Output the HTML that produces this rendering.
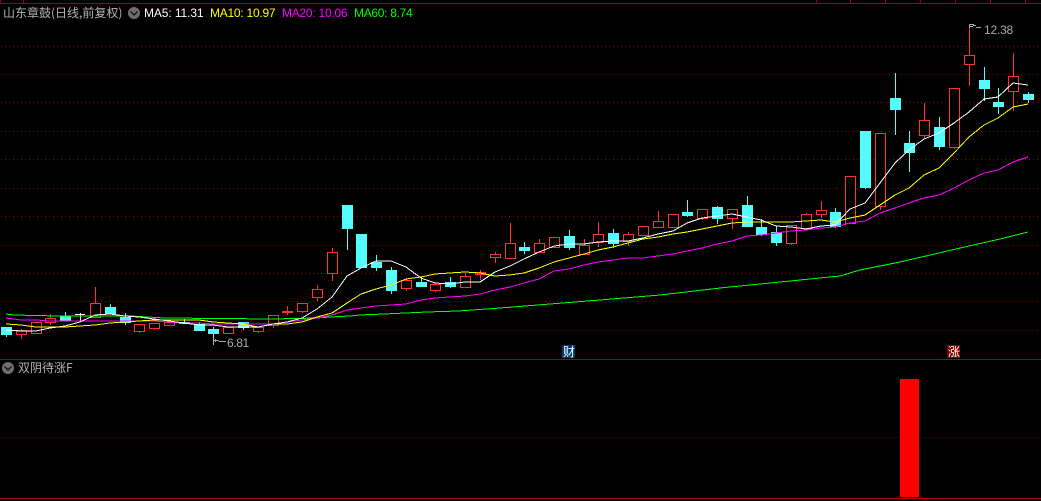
<!DOCTYPE html>
<html><head><meta charset="utf-8"><style>
html,body{margin:0;padding:0;background:#000;width:1041px;height:501px;overflow:hidden}
svg{position:absolute;left:0;top:0}
.t{position:absolute;white-space:nowrap;font:12px/14px "Liberation Sans",sans-serif}
.c{font-family:"WenQuanYi Zen Hei","Noto Sans CJK SC",sans-serif;color:#b4b4b4;font-size:12px}
</style></head><body>
<svg width="1041" height="501" viewBox="0 0 1041 501" shape-rendering="crispEdges">
<defs>
<pattern id="d" x="1" y="0" width="4" height="1" patternUnits="userSpaceOnUse"><rect width="1" height="1" fill="#a00000"/></pattern>
<pattern id="e" x="1" y="0" width="4" height="1" patternUnits="userSpaceOnUse"><rect width="1" height="1" fill="#800000"/></pattern>
</defs>
<rect width="1041" height="501" fill="#000"/>
<g fill="url(#d)">
<rect y="46" width="1041" height="1"/><rect y="74" width="1041" height="1"/><rect y="102" width="1041" height="1"/><rect y="131" width="1041" height="1"/><rect y="159" width="1041" height="1"/><rect y="188" width="1041" height="1"/><rect y="216" width="1041" height="1"/><rect y="245" width="1041" height="1"/><rect y="273" width="1041" height="1"/><rect y="301" width="1041" height="1"/><rect y="330" width="1041" height="1"/>
</g>
<rect y="437" width="1041" height="1" fill="url(#e)"/>
<path d="M0 3.500H1041M0.500 0V3M23.500 0V3M816.500 0V3M850.500 0V3M885.500 0V3M920.500 0V3M955.500 0V3M990.500 0V3M1025.500 0V3M0 359.500H1041" stroke="#a00000" fill="none"/>
<rect x="0" y="498" width="1041" height="1" fill="#c00000"/>
<rect x="900" y="379" width="19" height="118" fill="#f00"/>
<!-- cyan wicks -->
<path fill="none" stroke="#54fcfc" d="M6.500 327V337M65.500 312V321M110.500 304V314M125.500 313V325M184.500 319V324M199.500 322V331M213.500 327V338M243.500 322V330M347.500 205V250M361.500 234V268M376.500 255V271M391.500 267V294M421.500 277V287M450.500 277V288M524.500 242V254M569.500 230V250M613.500 229V248M687.500 200V217M717.500 206V224M747.500 196V227M761.500 219V236M776.500 226V246M835.500 208V228M865.500 131V189M895.500 73V135M909.500 131V172M939.500 117V150M984.500 67V101M998.500 88V114M1028.500 92V103"/>
<!-- cyan bodies -->
<g fill="#54fcfc">
<rect x="1" y="327" width="11" height="8"/><rect x="60" y="316" width="11" height="5"/><rect x="105" y="307" width="11" height="7"/><rect x="120" y="317" width="11" height="6"/><rect x="179" y="322" width="11" height="2"/><rect x="194" y="324" width="11" height="7"/><rect x="208" y="329" width="11" height="5"/><rect x="238" y="322" width="11" height="6"/><rect x="342" y="205" width="11" height="24"/><rect x="356" y="234" width="11" height="34"/><rect x="371" y="262" width="11" height="6"/><rect x="386" y="270" width="11" height="21"/><rect x="416" y="282" width="11" height="5"/><rect x="445" y="282" width="11" height="5"/><rect x="519" y="247" width="11" height="4"/><rect x="564" y="236" width="11" height="12"/><rect x="608" y="233" width="11" height="11"/><rect x="682" y="212" width="11" height="4"/><rect x="712" y="207" width="11" height="12"/><rect x="742" y="205" width="11" height="22"/><rect x="756" y="227" width="11" height="8"/><rect x="771" y="232" width="11" height="11"/><rect x="830" y="212" width="11" height="15"/><rect x="860" y="131" width="11" height="57"/><rect x="890" y="98" width="11" height="12"/><rect x="904" y="143" width="11" height="10"/><rect x="934" y="127" width="11" height="20"/><rect x="979" y="80" width="11" height="9"/><rect x="993" y="102" width="11" height="5"/><rect x="1023" y="94" width="11" height="6"/>
</g>
<path fill="none" stroke="#fff" d="M80.500 313V321M75 314.500H85"/>
<!-- red wicks -->
<path fill="none" stroke="#ff3232" d="M21.500 329V339M36.500 322V334M50.500 314V325M95.500 287V318M139.500 324V333M154.500 323V330M169.500 320V326M228.500 327V334M258.500 327V333M273.500 315V328M287.500 306V315M302.500 303V313M317.500 285V301M332.500 248V281M406.500 278V291M435.500 284V292M465.500 273V288M480.500 270V280M495.500 252V263M510.500 223V259M539.500 239V253M554.500 237V248M584.500 239V255M598.500 222V247M628.500 232V246M643.500 226V236M658.500 211V228M673.500 214V228M702.500 209V220M732.500 209V229M791.500 225V245M806.500 213V229M821.500 201V218M850.500 176V224M880.500 133V210M924.500 103V138M954.500 88V149M969.500 28V86M1013.500 53V111"/>
<!-- red bodies -->
<g fill="#000" stroke="#ff3232">
<rect x="16.500" y="330.500" width="10" height="4"/><rect x="31.500" y="322.500" width="10" height="11"/><rect x="45.500" y="318.500" width="10" height="4"/><rect x="90.500" y="303.500" width="10" height="14"/><rect x="134.500" y="324.500" width="10" height="7"/><rect x="149.500" y="323.500" width="10" height="5"/><rect x="164.500" y="322.500" width="10" height="3"/><rect x="223.500" y="327.500" width="10" height="6"/><rect x="253.500" y="327.500" width="10" height="4"/><rect x="268.500" y="315.500" width="10" height="10"/><rect x="282.500" y="311.500" width="10" height="1"/><rect x="297.500" y="303.500" width="10" height="8"/><rect x="312.500" y="289.500" width="10" height="8"/><rect x="327.500" y="252.500" width="10" height="21"/><rect x="401.500" y="280.500" width="10" height="8"/><rect x="430.500" y="284.500" width="10" height="6"/><rect x="460.500" y="276.500" width="10" height="11"/><rect x="475.500" y="272.500" width="10" height="2"/><rect x="490.500" y="254.500" width="10" height="3"/><rect x="505.500" y="243.500" width="10" height="15"/><rect x="534.500" y="243.500" width="10" height="9"/><rect x="549.500" y="237.500" width="10" height="10"/><rect x="579.500" y="245.500" width="10" height="9"/><rect x="593.500" y="234.500" width="10" height="8"/><rect x="623.500" y="234.500" width="10" height="7"/><rect x="638.500" y="226.500" width="10" height="9"/><rect x="653.500" y="221.500" width="10" height="6"/><rect x="668.500" y="214.500" width="10" height="13"/><rect x="697.500" y="209.500" width="10" height="9"/><rect x="727.500" y="209.500" width="10" height="9"/><rect x="786.500" y="225.500" width="10" height="18"/><rect x="801.500" y="214.500" width="10" height="14"/><rect x="816.500" y="210.500" width="10" height="4"/><rect x="845.500" y="176.500" width="10" height="47"/><rect x="875.500" y="133.500" width="10" height="73"/><rect x="919.500" y="120.500" width="10" height="15"/><rect x="949.500" y="88.500" width="10" height="59"/><rect x="964.500" y="55.500" width="10" height="9"/><rect x="1008.500" y="76.500" width="10" height="15"/>
</g>
<!-- MA60 -->
<polyline fill="none" stroke="#00ff00" points="6,314 14,315 58,316 130,316 165,318 273,319 317,318 330,317 350,316 360,315 384,314 427,312 458,311 500,308 550,304 600,300 660,295 720,288 780,282 840,276 860,270 900,262 956,249 1000,239 1028,232"/>
<!-- MA20 -->
<polyline fill="none" stroke="#ff00ff" points="6,318 21,320 36,320 50,321 125,321 154,321 169,322 184,323 199,323 213,324 273,324 287,322 302,320 317,318 332,315 347,310 361,308 376,306 391,305 406,304 421,300 435,298 450,297 465,296 480,294 495,290 510,287 524,283 539,279 554,271 569,269 584,265 598,262 613,260 628,258 643,258 658,256 673,254 687,251 702,248 717,244 732,241 747,236 761,235 776,233 791,231 806,230 821,228 835,227 850,223 865,221 880,213 895,208 909,203 924,198 939,195 954,188 969,180 984,173 998,170 1013,162 1028,157"/>
<!-- MA10 -->
<polyline fill="none" stroke="#ffff00" points="6,324 21,325 36,327 50,327 65,327 80,326 95,325 110,323 125,322 139,321 154,320 169,320 184,320 199,320 213,322 228,323 243,324 258,327 273,324 287,324 302,322 317,317 332,313 347,303 361,294 376,289 391,285 406,279 421,277 435,274 450,273 465,272 480,273 495,276 510,275 524,273 539,268 554,262 569,258 584,254 598,250 613,247 628,243 643,239 658,237 673,234 687,232 702,229 717,226 732,223 747,222 761,222 776,222 791,222 806,221 821,220 835,222 850,218 865,215 880,205 895,195 909,188 924,175 939,168 954,153 969,137 984,125 998,118 1013,107 1028,104"/>
<!-- MA5 -->
<polyline fill="none" stroke="#ffffff" points="6,330 21,331 36,331 50,328 65,326 80,322 95,315 110,314 125,316 139,317 154,319 169,321 184,323 199,325 213,325 228,327 243,327 258,327 273,324 287,322 302,318 317,309 332,297 347,276 361,268 376,261 391,261 406,267 421,278 435,283 450,284 465,282 480,282 495,272 510,266 524,259 539,252 554,246 569,244 584,244 598,242 613,241 628,241 643,238 658,234 673,231 687,223 702,218 717,216 732,214 747,217 761,220 776,226 791,227 806,229 821,226 835,225 850,209 865,203 880,183 895,163 909,150 924,139 939,133 954,123 969,112 984,99 998,97 1013,83 1028,85"/>
<!-- markers -->
<path fill="none" stroke="#aaa" d="M213.500 338V345M214 340.500H219M219 341.500H226M215 339.500H216M215 341.500H216"/>
<path fill="none" stroke="#aaa" d="M969.500 24V28M970 24.500H974M970 26.500H973M973 25.500H976M976 27.500H981"/>
<!-- badges -->
<rect x="562" y="345" width="13" height="13" fill="#003a70"/>
<rect x="947" y="345" width="13" height="13" fill="#800000"/>
</svg>
<svg width="1041" height="501" viewBox="0 0 1041 501">
<circle cx="134" cy="13" r="6" fill="#6e6e6e"/><path d="M130.500 11.500L134 15L137.500 11.500" fill="none" stroke="#111" stroke-width="1.300"/>
<circle cx="8" cy="368" r="6" fill="#6e6e6e"/><path d="M4.500 366.500L8 370L11.500 366.500" fill="none" stroke="#111" stroke-width="1.300"/>
</svg>
<div class="t c" style="left:3px;top:6px;width:125px">山东章鼓(日线,前复权)</div>
<div class="t" style="left:144px;top:6px;color:#fff;letter-spacing:-.1px">MA5: 11.31</div>
<div class="t" style="left:210px;top:6px;color:#ff0;letter-spacing:-.25px">MA10: 10.97</div>
<div class="t" style="left:282px;top:6px;color:#f0f;letter-spacing:-.25px">MA20: 10.06</div>
<div class="t" style="left:354px;top:6px;color:#0f0;letter-spacing:-.3px">MA60: 8.74</div>
<div class="t" style="left:227px;top:336px;color:#aaa;letter-spacing:-.4px">6.81</div>
<div class="t" style="left:984px;top:23px;color:#aaa;letter-spacing:-.2px">12.38</div>
<div class="t c" style="left:563px;top:345px;color:#fff">财</div>
<div class="t c" style="left:948px;top:345px;color:#fff">涨</div>
<div class="t c" style="left:18px;top:361px">双阴待涨F</div>
</body></html>
